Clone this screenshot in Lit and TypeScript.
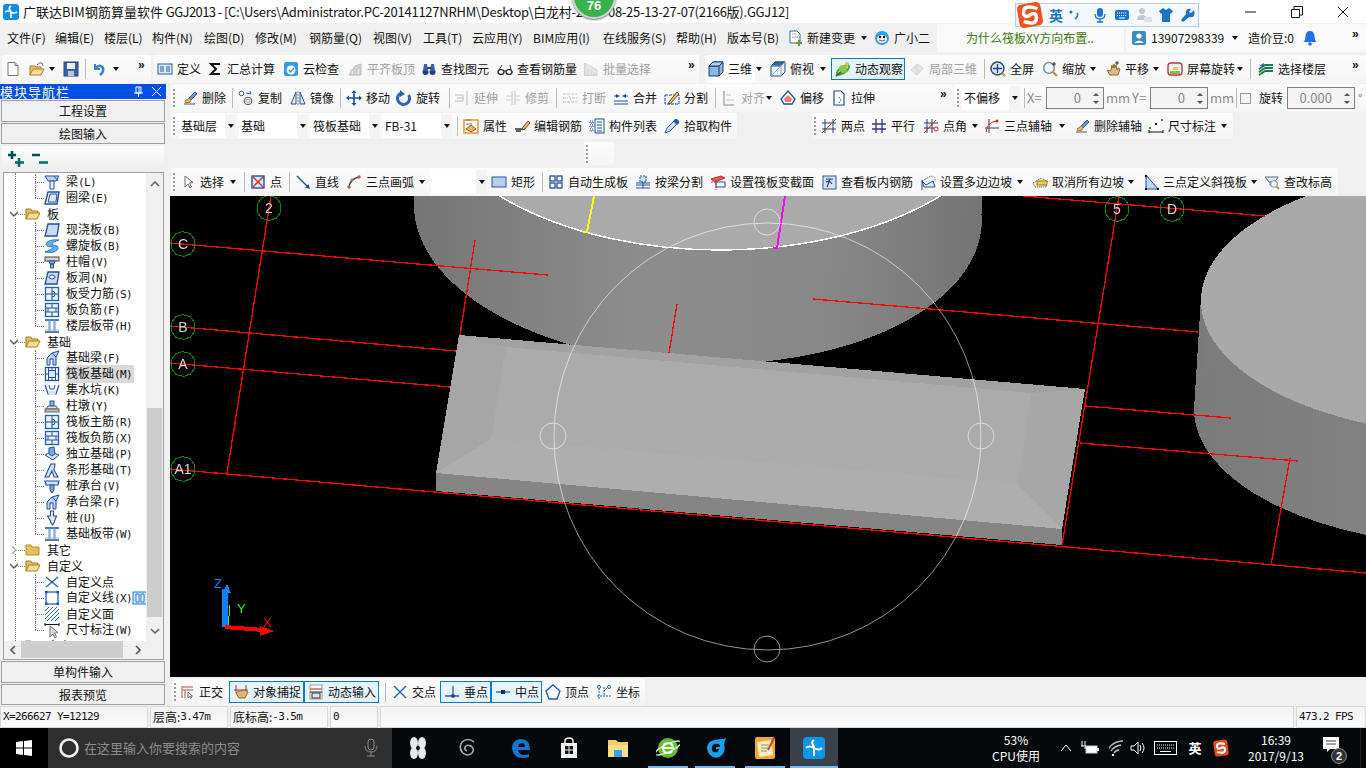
import { LitElement, html, css, svg } from "lit";
import { customElement } from "lit/decorators.js";

const I: Record<string, any> = {
  new: svg`<path d="M3 1.500h7l3 3v10H3z" fill="#fff" stroke="#777"/><path d="M10 1.500v3h3" fill="#ddd" stroke="#777"/>`,
  open: svg`<path d="M1 14V5h5l1 1h5v3" fill="#e9c469" stroke="#a87d22"/><path d="M1 14l3-6h11l-3 6z" fill="#f7dc93" stroke="#a87d22"/><path d="M8 4q2-3 5-2l1 3" stroke="#3a6fb5" fill="none"/>`,
  save: svg`<rect x="1" y="1" width="14" height="14" fill="#3d5fa8" stroke="#26427e"/><rect x="4" y="2" width="8" height="6" fill="#e6eef8"/><rect x="5" y="10" width="6" height="5" fill="#b9c4d6"/>`,
  undo: svg`<path d="M4 3v5h5" fill="none" stroke="#3a7fd5" stroke-width="2"/><path d="M4 8q5-6 8-1 1 4-3 7" fill="none" stroke="#3a7fd5" stroke-width="2.600"/>`,
  define: svg`<rect x="1" y="3" width="14" height="10" fill="#dce8f7" stroke="#2a5aa5"/><path d="M3 6h4M3 8h4M3 10h4M9 6h4M9 8h4M9 10h4" stroke="#2a5aa5"/>`,
  sigma: svg`<path d="M12 4V3H4l5 5-5 5h8v-1" fill="none" stroke="#111" stroke-width="2"/>`,
  cloud: svg`<rect x="1" y="1" width="14" height="14" rx="2" fill="#2f9be8"/><circle cx="8" cy="9" r="4.500" fill="#fff"/><path d="M5.500 9l2 2 3.500-4" fill="none" stroke="#2f9be8" stroke-width="1.500"/>`,
  align: svg`<path d="M2 14l6-9 6-2v11z" fill="#bbb" stroke="#999"/><path d="M4 14V9h3v5zM10 14V7h3v7z" fill="#ddd" stroke="#999"/>`,
  binoc: svg`<circle cx="4.500" cy="11" r="3" fill="#24408a"/><circle cx="11.500" cy="11" r="3" fill="#24408a"/><path d="M3 3h3l1 7H2zM10 3h3l1 7H9z" fill="#3c5fa8"/><rect x="6" y="6" width="4" height="2" fill="#24408a"/>`,
  glasses: svg`<ellipse cx="4" cy="11" rx="3" ry="2.400" fill="#fff" stroke="#333" stroke-width="1.400"/><ellipse cx="12" cy="11" rx="3" ry="2.400" fill="#fff" stroke="#333" stroke-width="1.400"/><path d="M7 10h2M2 9l3-5M14 9l-1-5" stroke="#333" fill="none"/>`,
  batch: svg`<path d="M2 2v12h12" fill="none" stroke="#bbb" stroke-width="2"/><path d="M2 2l12 7v5H2z" fill="#ddd" stroke="#bbb"/><path d="M5 7v7M8 9v5M11 11v3" stroke="#bbb"/>`,
  cube: svg`<path d="M1 5l4-4h10v10l-4 4H1z" fill="#8db7df" stroke="#123a6b"/><path d="M1 5h10v10M11 5l4-4" fill="none" stroke="#123a6b"/><path d="M1 5l4-4h10l-4 4z" fill="#b5d2ee" stroke="#123a6b"/>`,
  top: svg`<path d="M1 5l4-4h10v10l-4 4H1z" fill="#eaf1f9" stroke="#1d4a80"/><path d="M1 5l4-4h10l-4 4z" fill="#2f6aa8" stroke="#1d4a80"/><path d="M1 5h10v10M11 5l4-4M1 15l10-10" fill="none" stroke="#8aa9cc"/>`,
  orbit: svg`<ellipse cx="8" cy="9" rx="7" ry="3" fill="none" stroke="#4ba02c" stroke-width="2" transform="rotate(-35 8 9)"/><circle cx="8" cy="8" r="4" fill="#8dc63f"/><circle cx="12" cy="3" r="2" fill="#e8c12c"/><path d="M1 15l5-4" stroke="#2a6e2a" stroke-width="2"/>`,
  part: svg`<path d="M2 9l6-6 6 4-6 7z" fill="#ddd" stroke="#bbb"/><path d="M5 6l6 4M8 3v11" stroke="#bbb"/>`,
  full: svg`<circle cx="7.500" cy="7.500" r="6.500" fill="#dce8f7" stroke="#24408a" stroke-width="1.400"/><path d="M7.500 3v9M3 7.500h9" stroke="#24408a" stroke-width="1.300"/><path d="M12 12l3 3" stroke="#c8912e" stroke-width="2.400"/>`,
  zoom: svg`<circle cx="7" cy="7" r="5.400" fill="#f1f5fa" stroke="#7b8ea8" stroke-width="1.500"/><path d="M11 11l4 4" stroke="#c8912e" stroke-width="2.400"/><path d="M12 1v4M10 3h4" stroke="#333"/>`,
  pan: svg`<path d="M2 9l3 5h8l2-6-2-1-1 2-1-5-1 3-1-4-1 4-1-3-1 5-1 1z" fill="#d8bb80" stroke="#8a6d3a"/><path d="M12 0v4M10 2h4" stroke="#333"/>`,
  srot: svg`<rect x="1" y="2" width="14" height="12" rx="3" fill="#e9f3fa" stroke="#cc3333" stroke-width="1.400"/><path d="M3 10h10v3H3z" fill="#7fbf55"/><path d="M6 6h5v3H6z" fill="#efc94c"/>`,
  floors: svg`<path d="M1 8l6-4h8M1 11l6-4h8M1 14l6-4h8" fill="none" stroke="#1a7a50" stroke-width="1.800"/><path d="M1 5l5-3v3z" fill="#2a62b5"/>`,
  brush: svg`<path d="M2 14h11" stroke="#555"/><path d="M13 2L7 8l2 2 6-6z" fill="#6f93c4" stroke="#3a5a92"/><path d="M7 8l-4 3 1 2 4-1 1-2z" fill="#e8b870" stroke="#a37a3a"/>`,
  copy: svg`<circle cx="3.500" cy="3.500" r="2.300" fill="#fff" stroke="#555"/><circle cx="10" cy="11" r="3.800" fill="#fff" stroke="#555"/><circle cx="10" cy="11" r="2" fill="none" stroke="#999"/><path d="M8 3l5 1-1-3" fill="none" stroke="#1d5fb5"/>`,
  mirror: svg`<path d="M6 2v12H1zM10 2v12h5z" fill="#e4ecf7" stroke="#2a4f92"/><path d="M8 1v14" stroke="#888" stroke-dasharray="2 1"/>`,
  move: svg`<path d="M8 1v14M1 8h14" stroke="#1d4f9e" stroke-width="1.600"/><path d="M8 0l-2.500 3h5zM8 16l-2.500-3h5zM0 8l3-2.500v5zM16 8l-3-2.500v5z" fill="#1d4f9e"/>`,
  rot: svg`<path d="M12.500 5A6 6 0 1 1 5 3" fill="none" stroke="#2b62b8" stroke-width="3"/><path d="M4 0v7l5-3z" fill="#2b62b8"/>`,
  extend: svg`<path d="M1 5h8v6H1" fill="none" stroke="#999"/><path d="M3 8h7M13 1v14" stroke="#999"/>`,
  trim: svg`<path d="M7 1v14M10 1v14" stroke="#999"/><path d="M1 6h5M1 10h5M11 6h4M11 10h4" stroke="#aaa"/>`,
  brk: svg`<path d="M1 4h14M1 12h14M1 8h5M10 8h5" stroke="#999" stroke-dasharray="3 1"/><path d="M7 6l2 4" stroke="#999"/>`,
  merge: svg`<path d="M1 11h14M1 14h14" stroke="#1d4f9e"/><path d="M3 4l4 2-4 2zM13 4L9 6l4 2z" fill="#1d4f9e"/><path d="M1 6h3M12 6h3" stroke="#1d4f9e"/>`,
  split: svg`<rect x="1" y="5" width="14" height="9" fill="#f2f6fb" stroke="#1c39d8" stroke-dasharray="3 1"/><path d="M5 12l8-10 2 2-8 9-3 1z" fill="#e8c06c" stroke="#6b4a1d"/>`,
  dalign: svg`<path d="M3 1v14h10" fill="none" stroke="#999" stroke-width="2"/><path d="M5 4h5v2H5zM5 9h8v2H5z" fill="#ccc"/>`,
  offset: svg`<path d="M8 1l7 8-3 5H4l-3-5z" fill="#fff" stroke="#1f4e9e" stroke-width="1.300"/><path d="M8 5l4 4-1 3H5l-1-3z" fill="#ee7a6b"/>`,
  stretch: svg`<path d="M3 1h7l3 3v11H3z" fill="#fff" stroke="#1f4e9e" stroke-width="1.200"/><path d="M8 7l2 3-2 3" fill="none" stroke="#333" stroke-dasharray="1 1"/>`,
  props: svg`<rect x="1" y="2" width="14" height="13" fill="#fff" stroke="#e3933a" stroke-width="1.500"/><path d="M3 6h6M3 2h5" stroke="#777"/><path d="M3 11l5-4 5 4-5 3z" fill="#e8b45e" stroke="#8a6220"/>`,
  edit: svg`<path d="M1 11h10M2 13h5" stroke="#333" stroke-width="1.300"/><path d="M9 9l5-6 2 2-5 6-3 1z" fill="#e8c06c" stroke="#6b4a1d"/>`,
  list: svg`<path d="M1 3h3v2H1zM1 7h3v2H1zM1 11h3v2H1z" fill="#fff" stroke="#1f4e9e" stroke-dasharray="1 1"/><rect x="6" y="1" width="9" height="14" fill="#f3f7fc" stroke="#1f4e9e"/><path d="M8 4h5M8 7h5M8 10h5M8 13h5" stroke="#1f4e9e"/>`,
  pick: svg`<path d="M1 15l2-5 7-7 3 3-7 7z" fill="#cfe0f5" stroke="#2a5aa5"/><path d="M9 3l2-2h2l2 2v2l-2 2z" fill="#2a5aa5"/>`,
  twopt: svg`<path d="M4 1v14M12 1v14M1 5h14M1 11h14" stroke="#2e3a7a"/><path d="M1 15L15 1" stroke="#d81e1e"/><rect x="3" y="10" width="2" height="2" fill="#2e8a2e"/><rect x="11" y="4" width="2" height="2" fill="#2e8a2e"/>`,
  par: svg`<path d="M5 1v14M11 1v14M1 6h14M1 11h14" stroke="#2e3a7a" stroke-width="1.300"/>`,
  ptang: svg`<path d="M4 1v14M9 1v14M1 5h14M1 10h10" stroke="#2e3a7a"/><path d="M1 15L13 2" stroke="#d81e1e"/><circle cx="13" cy="11" r="2" fill="none" stroke="#d81e1e"/>`,
  arcax: svg`<path d="M5 1v14M1 10h14" stroke="#2e3a7a"/><path d="M2 14Q3 4 13 3" fill="none" stroke="#d81e1e"/><circle cx="13" cy="3" r="1.500" fill="#d81e1e"/>`,
  dim: svg`<path d="M1 12v3M15 12v3M1 14h14" stroke="#111"/><rect x="1" y="9" width="2" height="2" fill="#2ea82e"/><rect x="7" y="5" width="2" height="2" fill="#111"/><rect x="13" y="1" width="2" height="2" fill="#2ea82e"/>`,
  arrow: svg`<path d="M5 2v11l3-3 2 4 1.500-1-2-4 3.500-.5z" fill="#fff" stroke="#667"/>`,
  point: svg`<rect x="2" y="2" width="12" height="12" fill="#dce8f7" stroke="#1f3e8f" stroke-width="1.300"/><path d="M3 3l10 10M13 3L3 13" stroke="#c93030" stroke-width="1.300"/>`,
  line: svg`<path d="M2 2l11 11" stroke="#24528f" stroke-width="1.400"/><path d="M15 15l-5-1.500 3.500-3.500z" fill="#24528f"/>`,
  arc: svg`<path d="M3 13Q4 5 13 3" fill="none" stroke="#1f3e8f" stroke-width="1.600"/><circle cx="3" cy="13" r="1.800" fill="#d65a3a"/><circle cx="13" cy="3" r="1.800" fill="#d65a3a"/><circle cx="6" cy="6" r="1.400" fill="#d65a3a"/>`,
  rect: svg`<rect x="1" y="3" width="14" height="10" fill="#b8d0f0" stroke="#2452a5"/>`,
  auto: svg`<g fill="#fff" stroke="#1f4e9e" stroke-width="1.300"><rect x="2" y="2" width="5" height="5"/><rect x="9" y="2" width="5" height="5"/><rect x="2" y="9" width="5" height="5"/><rect x="9" y="9" width="5" height="5"/></g>`,
  bsplit: svg`<path d="M1 9h14M1 11h14M1 14h14" stroke="#1f4e9e"/><rect x="5" y="2" width="6" height="6" fill="#cfe0f5" stroke="#1f4e9e" stroke-dasharray="2 1"/><path d="M8 8v6" stroke="#1f4e9e"/>`,
  section: svg`<path d="M1 5l10-3 4 2-10 4z" fill="#e8554e" stroke="#b03030"/><rect x="6" y="8" width="9" height="5" fill="#fff" stroke="#1f4e9e"/><path d="M1 8h5v8" fill="none" stroke="#c03030" stroke-dasharray="2 1"/>`,
  view: svg`<rect x="2" y="2" width="13" height="13" fill="#d5e3f5" stroke="#2a5aa5"/><path d="M5 5h7M9 5l-3 8M5 8q4-2 6 2" fill="none" stroke="#1f3e8f" stroke-width="1.200"/>`,
  poly: svg`<path d="M2 7l9-5 4 2v3" fill="none" stroke="#1f4e9e" stroke-dasharray="1 1"/><path d="M2 7l4 4 7-4 2 6H4z" fill="#dfeaf7" stroke="#1f4e9e"/><path d="M2 6v10" stroke="#1f4e9e"/>`,
  cancel: svg`<path d="M1 9l8-5 6 3-1 6H3z" fill="#f6e9b0" stroke="#1f4e9e" stroke-dasharray="1 1"/><path d="M5 7h10v4H5z" fill="#eec95e" stroke="#997a1e"/>`,
  tri: svg`<path d="M3 1v14h12z" fill="#bcd8f5" stroke="#1f4e9e"/><circle cx="3" cy="2" r="1.200" fill="#111"/><circle cx="3" cy="15" r="1.200" fill="#111"/><circle cx="15" cy="15" r="1.200" fill="#111"/>`,
  elev: svg`<path d="M1 3h13l-3 5H5z" fill="#e8eef6" stroke="#5a6a80"/><path d="M6 8h4v3H6z" fill="#cbd4e0" stroke="#5a6a80"/><circle cx="10" cy="10" r="3.400" fill="#f1f5fa" stroke="#7b8ea8"/><path d="M12.500 12.500L15 15" stroke="#c8912e" stroke-width="2"/>`,
  newchg: svg`<path d="M3 1h7l3 3v9H3z" fill="#fff" stroke="#2a70b8"/><path d="M5 4h4M5 7h6" stroke="#9ab"/><path d="M9 12h2v-2h2v2h2v2h-2v2h-2v-2H9z" fill="#5aa02c"/>`,
  xiao: svg`<circle cx="8" cy="8" r="7" fill="#2d9ee8"/><ellipse cx="8" cy="9" rx="5" ry="4" fill="#e8f6fd"/><circle cx="6" cy="7" r="1.200" fill="#123"/><circle cx="10" cy="7" r="1.200" fill="#123"/><path d="M5 10q3 2 6 0" fill="none" stroke="#e25" />`,
  user: svg`<rect x="1" y="1" width="14" height="14" rx="2" fill="#3a8cc8"/><circle cx="8" cy="6" r="2.600" fill="#fff"/><path d="M3 13q5-5 10 0z" fill="#fff"/>`,
  bell: svg`<path d="M8 1q4 0 4.500 5 0 4 2 6H1.500q2-2 2-6Q4 1 8 1z" fill="#1a73e0"/><circle cx="8" cy="14" r="1.800" fill="#1a73e0"/>`,
  ortho: svg`<path d="M3 14V3h11M6 6v8M3 6h11" fill="none" stroke="#c98a8a" stroke-width="1.500"/><path d="M9 8v6l1.500-1.500 1 2 1-.5-1-2h2z" fill="#fff" stroke="#667"/>`,
  objsnap: svg`<path d="M3 1v8M13 1v8M1 6h14" stroke="#a33"/><path d="M3 9l3 5h6l3-6-3-2-6 1z" fill="#dcb772" stroke="#8a6d3a"/>`,
  dyn: svg`<rect x="2" y="1" width="12" height="14" fill="#fff" stroke="#999"/><path d="M2 5h12" stroke="#c66" stroke-width="1.500"/><path d="M2 8h12" stroke="#333"/><rect x="4" y="9" width="8" height="5" fill="#e4e4e4" stroke="#333"/>`,
  cross: svg`<path d="M2 2l12 12M14 2L2 14" stroke="#1f5fb5" stroke-width="1.400"/>`,
  perp: svg`<path d="M1 12h14M9 2v10" stroke="#1f5fb5" stroke-width="1.300"/><rect x="7.500" y="10.500" width="3" height="3" fill="#13306b"/>`,
  mid: svg`<path d="M1 8h14" stroke="#1f5fb5" stroke-width="1.300"/><rect x="6" y="6" width="4" height="4" fill="#13306b"/>`,
  vert: svg`<path d="M8 1l7 6-3 8H4L1 7z" fill="#fff" stroke="#1f5fb5" stroke-width="1.400"/>`,
  coord: svg`<path d="M3 1v14M1 12h14M8 3v9M13 2L8 7" stroke="#1f5fb5" stroke-dasharray="2 1"/><circle cx="3" cy="3" r="1.500" fill="#fff" stroke="#1f5fb5"/><circle cx="13" cy="3" r="1.500" fill="#fff" stroke="#1f5fb5"/>`,
  beam: svg`<path d="M1 2h14l-3 5H4z" fill="#bcd4f0" stroke="#1f4e9e"/><path d="M6 7h4v8H6z" fill="#e8f0fa" stroke="#1f4e9e"/><path d="M10 2l4 5" stroke="#1f4e9e"/>`,
  ring: svg`<path d="M4 2h11l-2 12H1z" fill="#fff" stroke="#1f4e9e" stroke-width="1.400"/><path d="M6 4h7l-1 8H4z" fill="#dbe7f7" stroke="#1f4e9e"/>`,
  cast: svg`<path d="M4 2h11l-2 12H1z" fill="#c6dcf5" stroke="#1f4e9e" stroke-width="1.300"/>`,
  spiral: svg`<path d="M15 2Q4 1 2 6q0 3 7 3 2 1-8 5 9 2 13-3 1-4-6-4 0-3 7-5z" fill="#67b0ec" stroke="#2a78c8"/>`,
  capi: svg`<rect x="1" y="3" width="14" height="4" fill="#d0d0d0" stroke="#444"/><path d="M5 7h6l-1 3H6zM6.500 10h3v4h-3z" fill="#8fb4e0" stroke="#1f4e9e"/>`,
  hole: svg`<path d="M4 2h11l-2 12H1z" fill="#c6dcf5" stroke="#1f4e9e" stroke-width="1.300"/><ellipse cx="8" cy="7" rx="3" ry="2" fill="#fff" stroke="#1f4e9e"/>`,
  force: svg`<rect x="1.500" y="1.500" width="13" height="13" fill="#eef4fb" stroke="#1f5fc5" stroke-width="1.300"/><path d="M8 2v12M2 8h12M8 5a3 3 0 1 1 0 6" fill="none" stroke="#1f4e9e"/>`,
  neg: svg`<rect x="1.500" y="1.500" width="13" height="13" fill="#eef4fb" stroke="#1f5fc5" stroke-width="1.300"/><path d="M8 2v4M8 10v4M2 6h12M2 10h12M4 6v4M12 6v4" stroke="#1f4e9e"/>`,
  band: svg`<path d="M1 2h14M1 14h14" stroke="#1f4e9e" stroke-width="1.400"/><path d="M5 2v12M11 2v12M6 2v12M10 2v12" stroke="#5f8fd0"/><path d="M1 12h14" stroke="#9fb8dc"/>`,
  fbeam: svg`<path d="M3 15V8l5-5 7-2-3 6v8h-3v-6H6v6z" fill="#b8d0ee" stroke="#1f4e9e"/><path d="M8 3l4 4" stroke="#1f4e9e"/>`,
  raft: svg`<rect x="1.500" y="1.500" width="13" height="13" fill="#fff" stroke="#1f4e9e" stroke-width="1.300"/><rect x="4.500" y="4.500" width="7" height="7" fill="#dbe7f7" stroke="#1f4e9e"/><path d="M8 2v2M8 12v2M2 8h2M12 8h2M4.500 2v2M11.500 2v2M4.500 12v2M11.500 12v2" stroke="#1f4e9e"/>`,
  pit: svg`<path d="M1 3l3 9h8l3-9" fill="none" stroke="#1f4e9e" stroke-width="1.200"/><path d="M5 3l1 4h4l1-4" fill="none" stroke="#1f4e9e"/><path d="M4 9h8l-1 4H5z" fill="#d8e4f4"/>`,
  pier: svg`<rect x="6" y="3" width="4" height="5" fill="#8fb4e0" stroke="#1f4e9e"/><path d="M4 8h8l2 3H2z" fill="#ddd" stroke="#555"/><rect x="1" y="11" width="14" height="3" fill="#bbb" stroke="#666"/>`,
  indep: svg`<path d="M1 9l6-3 8 3-6 5z" fill="#dbe7f7" stroke="#1f4e9e"/><path d="M5 8V2l5-1 1 7-3 2z" fill="#7ea6dd" stroke="#1f4e9e"/>`,
  strip: svg`<path d="M1 15l3-7 3-6h4l-1 6 4 7h-4l-2-6-3 6z" fill="#d2e1f4" stroke="#1f4e9e" stroke-width="1.100"/>`,
  cap: svg`<path d="M1 3h14l-1 4H2z" fill="#d2e1f4" stroke="#1f4e9e" stroke-width="1.200"/><path d="M6 7h4v5l-2 3-2-3z" fill="#7ea6dd" stroke="#1f4e9e"/>`,
  pile: svg`<path d="M6.500 1h3v5h3l-2 5 0 1-2 3-2-3v-1L3.500 6h3z" fill="#e2ecf8" stroke="#1f4e9e" stroke-width="1.100"/>`,
  xpt: svg`<path d="M2 3l12 10M14 3L2 13" stroke="#1f5fc5" stroke-width="1.200"/><circle cx="8" cy="8" r="1" fill="#1f3e8f"/>`,
  sq: svg`<rect x="2" y="2" width="12" height="12" fill="none" stroke="#1450c8" stroke-width="1.200"/><g fill="#1450c8"><rect x="1" y="1" width="2.500" height="2.500"/><rect x="12.500" y="1" width="2.500" height="2.500"/><rect x="1" y="12.500" width="2.500" height="2.500"/><rect x="12.500" y="12.500" width="2.500" height="2.500"/></g>`,
  hatch: svg`<path d="M1 5l4-4M1 9l8-8M1 13L13 1M3 15L15 3M7 15l8-8M11 15l4-4" stroke="#1f5fc5"/>`,
  tdim: svg`<path d="M1 1v3M15 1v3M1 2.500h14" stroke="#111"/><path d="M6 4v11l3-3 2 4 1.500-1-2-4 3.500-.5z" fill="#ddd" stroke="#777"/>`,
  folder: svg`<path d="M1 13V3h5l1 2h7v8z" fill="#e8bf58" stroke="#b58b2a"/>`,
  folderO: svg`<path d="M1 13V3h5l1 2h6v2" fill="#e0bb62" stroke="#a88023"/><path d="M1 13l3-6h11l-3 6z" fill="#f8de93" stroke="#a88023"/>`,
  mini: svg`<rect x="1" y="2" width="14" height="12" fill="#cfe6fb" stroke="#1a7de0"/><path d="M4 4h3v8H4zM9 4h3v8H9z" fill="#fff" stroke="#1a7de0"/>`,
};

interface E { k: string; x: number; ic?: string; t?: string; g?: boolean; w?: number; box?: boolean; col?: string; v?: string; wb?: boolean; fs?: number }
const it = (x: number, ic: string, t = "", o: Partial<E> = {}): E => ({ k: "i", x: x - 8, ic, t, ...o });
const bx = (x: number, w: number, ic: string, t: string): E => ({ k: "i", x, ic, t, box: true, w });
const dd = (x: number): E => ({ k: "d", x: x - 4 });
const sp = (x: number): E => ({ k: "s", x });
const hd = (x: number): E => ({ k: "h", x: x - 1 });
const tx = (x: number, t: string, o: Partial<E> = {}): E => ({ k: "t", x, t, ...o });
const more = (x: number): E => ({ k: "m", x: x - 5 });
const cb = (x: number, w: number, t: string): E => ({ k: "c", x, t, w });
const spin = (x: number, w: number, v: string): E => ({ k: "n", x, w, v });
const chk = (x: number): E => ({ k: "x", x });

type Group = [number, number, E[], string?];

function item(e: E, avail: number) {
  const ic = e.ic ? html`<svg class="ic" viewBox="0 0 16 16">${I[e.ic]}</svg>` : null;
  switch (e.k) {
    case "i": {
      const w = e.w ?? avail;
      const cls = `it ${e.g ? "gray" : ""} ${e.box ? "box" : ""} ${e.wb ? "wb" : ""}`;
      return html`<div class=${cls} style="width:${w}px;margin-right:${avail - w}px">${ic}${e.t ? html`<span class="lb">${e.t}</span>` : null}</div>`;
    }
    case "d": return html`<div class="it" style="width:${avail}px"><i class="caret"></i></div>`;
    case "s": return html`<div class="it" style="width:${avail}px"><i class="sep"></i></div>`;
    case "h": return html`<div class="it" style="width:${avail}px"><i class="handle"></i></div>`;
    case "t": return html`<div class="it" style="width:${avail}px;color:${e.col ?? "inherit"};font-size:${e.fs ?? 12}px">${e.t}</div>`;
    case "m": return html`<div class="it more" style="width:${avail}px">»</div>`;
    case "c": return html`<div class="combo" style="width:${e.w}px;margin-right:${avail - e.w!}px"><span class="ctext">${e.t}</span><span class="cdrop"><i class="caret"></i></span></div>`;
    case "n": return html`<div class="spin" style="width:${e.w}px;margin-right:${avail - e.w!}px"><span class="nv">${e.v}</span><span class="sb"><i class="up"></i><i class="down"></i></span></div>`;
    case "x": return html`<div class="it" style="width:${avail}px"><i class="check"></i></div>`;
  }
  return null;
}

function row(origin: number, groups: Group[], cls: string) {
  let prev = origin;
  return html`<div class="row ${cls}">
    ${groups.map(([g0, g1, es, gc]) => {
      const m = g0 - prev;
      prev = g1;
      return html`<div class="group ${gc ?? ""}" style="margin-left:${m}px;width:${g1 - g0}px;padding-left:${es[0].x - g0}px">
        ${es.map((e, i) => item(e, (i + 1 < es.length ? es[i + 1].x : g1) - e.x))}
      </div>`;
    })}
  </div>`;
}

const GM = { col: "#888", fs: 13 };
const MENU: Group[] = [
  [0, 937, [
    tx(7, "文件(F)"), tx(55, "编辑(E)"), tx(104, "楼层(L)"), tx(152, "构件(N)"), tx(204, "绘图(D)"), tx(255, "修改(M)"),
    tx(309, "钢筋量(Q)"), tx(373, "视图(V)"), tx(423, "工具(T)"), tx(472, "云应用(Y)"), tx(533, "BIM应用(I)"), tx(603, "在线服务(S)"),
    tx(676, "帮助(H)"), tx(727, "版本号(B)"), it(795, "newchg", "新建变更"), dd(865), it(882, "xiao", "广小二"),
  ], "plain"],
  [937, 1124, [tx(966, "为什么筏板XY方向布置..", { col: "#3c7a10" })], "soft"],
  [1126, 1366, [it(1139, "user", "13907298339"), dd(1236), tx(1248, "造价豆:0"), it(1310, "bell"), more(1357)], "soft"],
];
const TB1: Group[] = [
  [2, 151, [it(13, "new"), it(37, "open"), dd(53), it(71, "save"), sp(85), it(99, "undo"), dd(117), more(143)]],
  [153, 699, [
    it(165, "define", "定义"), it(215, "sigma", "汇总计算"), it(291, "cloud", "云检查"), it(355, "align", "平齐板顶", { g: true }),
    it(429, "binoc", "查找图元"), it(505, "glasses", "查看钢筋量"), it(591, "batch", "批量选择", { g: true }), more(693),
  ]],
  [705, 1366, [
    it(716, "cube", "三维", { w: 47, wb: true }), dd(760), it(778, "top", "俯视"), dd(824), bx(831, 74, "orbit", "动态观察"),
    it(917, "part", "局部三维", { g: true }), sp(984), it(998, "full", "全屏"), it(1050, "zoom", "缩放"), dd(1094),
    it(1113, "pan", "平移"), dd(1157), it(1175, "srot", "屏幕旋转"), dd(1241), sp(1250), it(1266, "floors", "选择楼层"), more(1357),
  ]],
];
const R2: Group[] = [
  [171, 953, [
    hd(174), it(190, "brush", "删除"), sp(232), it(246, "copy", "复制"), it(298, "mirror", "镜像"), sp(340), it(354, "move", "移动"),
    it(404, "rot", "旋转"), sp(449), it(462, "extend", "延伸", { g: true }), it(513, "trim", "修剪", { g: true }), sp(556),
    it(570, "brk", "打断", { g: true }), it(621, "merge", "合并"), it(672, "split", "分割"), sp(715),
    it(729, "dalign", "对齐", { g: true }), dd(770), it(788, "offset", "偏移"), it(839, "stretch", "拉伸"), more(945),
  ]],
  [954, 1366, [
    hd(958), cb(962, 58, "不偏移"), sp(1024), tx(1027, "X=", GM), spin(1046, 58, "0"), tx(1106, "mm", GM),
    tx(1132, "Y=", GM), spin(1150, 58, "0"), tx(1210, "mm", GM), sp(1236), chk(1240), tx(1259, "旋转"),
    spin(1287, 68, "0.000"), tx(1358, "°", { col: "#666" }),
  ]],
];
const R3: Group[] = [
  [171, 737, [
    hd(174), cb(179, 57, "基础层"), cb(239, 69, "基础"), cb(311, 69, "筏板基础"), cb(383, 69, "FB-31"), sp(457),
    it(471, "props", "属性"), it(522, "edit", "编辑钢筋"), it(597, "list", "构件列表"), it(672, "pick", "拾取构件"),
  ]],
  [812, 1233, [
    hd(815), it(829, "twopt", "两点"), it(879, "par", "平行"), it(931, "ptang", "点角"), dd(976), it(992, "arcax", "三点辅轴"), dd(1063),
    it(1082, "brush", "删除辅轴"), it(1156, "dim", "尺寸标注"), dd(1225),
  ]],
];
const R4: Group[] = [[584, 614, [hd(587)]]];
const R5: Group[] = [
  [171, 1338, [
    hd(174), it(188, "arrow", "选择"), dd(234), sp(244), it(258, "point", "点"), sp(289), it(303, "line", "直线"), it(354, "arc", "三点画弧"), dd(423),
    cb(431, 56, ""), it(499, "rect", "矩形"), sp(542), it(556, "auto", "自动生成板"), it(643, "bsplit", "按梁分割"), it(718, "section", "设置筏板变截面"),
    it(829, "view", "查看板内钢筋"), it(928, "poly", "设置多边边坡"), dd(1021), it(1040, "cancel", "取消所有边坡"), dd(1132), it(1151, "tri", "三点定义斜筏板"), dd(1255),
    it(1272, "elev", "查改标高"),
  ]],
];
const SNAP: Group[] = [
  [172, 645, [
    hd(175), it(187, "ortho", "正交"), bx(229, 75, "objsnap", "对象捕捉"), bx(304, 75, "dyn", "动态输入"), sp(385), it(400, "cross", "交点"),
    bx(440, 51, "perp", "垂点"), bx(491, 51, "mid", "中点"), it(553, "vert", "顶点"), it(604, "coord", "坐标"),
  ]],
];

const TREE: [number, string, string, string?, boolean?, boolean?][] = [
  [1, "beam", "梁", "(L)"], [1, "ring", "圈梁", "(E)", true], [0, "folderO", "板"],
  [1, "cast", "现浇板", "(B)"], [1, "spiral", "螺旋板", "(B)"], [1, "capi", "柱帽", "(V)"], [1, "hole", "板洞", "(N)"],
  [1, "force", "板受力筋", "(S)"], [1, "neg", "板负筋", "(F)"], [1, "band", "楼层板带", "(H)", true], [0, "folderO", "基础"],
  [1, "fbeam", "基础梁", "(F)"], [1, "raft", "筏板基础", "(M)", false, true], [1, "pit", "集水坑", "(K)"], [1, "pier", "柱墩", "(Y)"],
  [1, "force", "筏板主筋", "(R)"], [1, "neg", "筏板负筋", "(X)"], [1, "indep", "独立基础", "(P)"], [1, "strip", "条形基础", "(T)"],
  [1, "cap", "桩承台", "(V)"], [1, "fbeam", "承台梁", "(F)"], [1, "pile", "桩", "(U)"], [1, "band", "基础板带", "(W)", true],
  [0, "folder", "其它"], [0, "folderO", "自定义"], [1, "xpt", "自定义点"], [1, "sq", "自定义线", "(X)"], [1, "hatch", "自定义面"], [1, "tdim", "尺寸标注", "(W)", true],
  [0, "folder", "土方"],
];

const GRID: [number, number, string][] = [[269, 208, "2"], [183, 244, "C"], [183, 327, "B"], [183, 364, "A"], [183, 469, "A1"], [1117, 209, "5"], [1172, 209, "D"]];
const RED: [number, number, number, number][] = [
  [170, 243, 548, 275], [170, 326, 456, 351], [170, 363, 450, 387], [170, 469, 1366, 573], [1023, 196, 1265, 216], [813, 299, 1198, 332],
  [1085, 406, 1231, 418], [1080, 443, 1298, 461], [271, 196, 227, 473], [475, 240, 460, 335], [677, 304, 669, 353], [1119, 196, 1062, 545], [1290, 458, 1271, 565],
];
const poly = (x: number, y: number) =>
  Array.from({ length: 10 }, (_, i) => `${(x + 12.5 * Math.cos((i * Math.PI) / 5 + 0.3)).toFixed(1)},${(y + 12.5 * Math.sin((i * Math.PI) / 5 + 0.3)).toFixed(1)}`).join(" ");

function scene() {
  return html`<svg class="scene" viewBox="170 196 1196 481" width="1196" height="481">
    <defs>
      <linearGradient id="s1" x1="0" x2="1" y1="0" y2="0"><stop offset="0" stop-color="#757575"/><stop offset=".4" stop-color="#8d8d8d"/><stop offset=".75" stop-color="#878787"/><stop offset="1" stop-color="#747474"/></linearGradient>
      <linearGradient id="s2" x1="0" x2="1" y1="0" y2="0"><stop offset="0" stop-color="#7a7a7a"/><stop offset=".3" stop-color="#828282"/><stop offset="1" stop-color="#8e8e8e"/></linearGradient>
    </defs>
    <rect x="170" y="196" width="1196" height="481" fill="#000"/>
    <rect x="414" y="190" width="568" height="24" fill="url(#s1)"/>
    <ellipse cx="698" cy="213" rx="284" ry="151" fill="url(#s1)" transform="rotate(2 698 213)"/>
    <ellipse cx="720" cy="82" rx="300" ry="168" fill="#aaa" stroke="#fff" stroke-width="1.500"/>
    <path d="M1194 409L1201 297H1366V409z" fill="url(#s2)"/>
    <ellipse cx="1478" cy="409" rx="284" ry="137" fill="url(#s2)"/>
    <ellipse cx="1485" cy="301" rx="284" ry="135" fill="#a9a9a9"/>
    <path d="M436 473L1062 529V545L436 491z" fill="#858585"/>
    <path d="M459 335L1085 389L1062 529L436 473z" fill="#a8a8a8"/>
    <path d="M459 335L1085 389L1031 393L506 347z" fill="#a2a2a2"/>
    <path d="M506 347L1031 393L1018 484L491 439z" fill="#ababab"/>
    <path d="M491 439L1018 484L1062 529L436 473z" fill="#aeaeae"/>
    <path d="M459 335L506 347L491 439L436 473z" fill="#a6a6a6"/>
    <path d="M1031 393L1085 389L1062 529L1018 484z" fill="#a7a7a7"/>
    ${RED.map(([a, b, c, d]) => svg`<line x1=${a} y1=${b} x2=${c} y2=${d} stroke="#f00" stroke-width="1.300"/>`)}
    <path d="M594 196L587 232H583" fill="none" stroke="#ff0" stroke-width="2"/>
    <path d="M785 196L777 248H773" fill="none" stroke="#f0f" stroke-width="2"/>
    <g fill="none" stroke="#949494" class="sc">
      <circle cx="767.500" cy="436.500" r="213.500"/>
      <circle cx="767" cy="222" r="13"/><circle cx="553" cy="436" r="13"/><circle cx="981" cy="436" r="13"/><circle cx="767" cy="649" r="13"/>
    </g>
    ${GRID.map(([x, y, t]) => svg`
      <polygon points=${poly(x, y)} fill="none" stroke="#0b8a0b"/>
      <text x=${x} y=${y + 5} text-anchor="middle" class="gt">${t}</text>`)}
    <path d="M225 627l0-38" stroke="#0a82ff" stroke-width="6"/><path d="M227 584l-4 9h8z" fill="#0a82ff"/>
    <path d="M228 627l2-22" stroke="#3cf03c"/>
    <path d="M225 627l38 3" stroke="#f00" stroke-width="4"/><path d="M274 631l-14-5v10z" fill="#f00"/>
    <text x="214" y="588" class="ax" fill="#1a82ff">Z</text><text x="237" y="613" class="ax" fill="#3cf03c">Y</text><text x="263" y="627" class="ax" fill="#f00">X</text>
  </svg>`;
}

const TASKS: [number, any, boolean?, boolean?][] = [
  [418, svg`<g fill="#e8e8e8"><ellipse cx="8" cy="7" rx="4" ry="6"/><ellipse cx="16" cy="7" rx="4" ry="6"/><ellipse cx="8" cy="17" rx="4" ry="6"/><ellipse cx="16" cy="17" rx="4" ry="6"/></g><circle cx="12" cy="12" r="2" fill="#111"/>`],
  [467, svg`<path d="M19 6Q13 1 7 6q-4 6 1 11 5 4 9 0 3-4-1-7-4-2-6 1-1 3 2 4" fill="none" stroke="#aaa" stroke-width="1.600"/>`],
  [521, svg`<path d="M3 13Q3 3 12 3q9 0 9 11H9q1 5 6 5 3 0 5-1v3q-3 1-6 1-9 0-11-9zM9 11h7q0-4-3-4-3 0-4 4z" fill="#0f78d4"/>`],
  [569, svg`<path d="M4 7h16v15H4z" fill="#f2f2f2"/><path d="M8 8V5q0-3 4-3t4 3v3" fill="none" stroke="#f2f2f2" stroke-width="1.500"/><path d="M8 10h3.500v3.500H8zM12.500 10H16v3.500h-3.500zM8 14.500h3.500V18H8zM12.500 14.500H16V18h-3.500z" fill="#111"/>`],
  [618, svg`<path d="M2 4h8l2 2h10v15H2z" fill="#f4d064"/><path d="M2 9h20v12H2z" fill="#f9e08c"/><path d="M8 14h8v7H8z" fill="#38a3e0"/>`],
  [668, svg`<circle cx="12" cy="12" r="10" fill="#5fbf2f"/><ellipse cx="12" cy="12" rx="14" ry="4" fill="none" stroke="#cfeeb0" stroke-width="1.400" transform="rotate(-25 12 12)"/><path d="M7 12h10q0-5-5-5-5 0-5 5 0 5 5 5 3 0 4-2" fill="none" stroke="#fff" stroke-width="2"/>`, false, true],
  [715, svg`<path d="M20 3l3-1-2 6q2 7-2 11-4 4-9 2-6-3-6-10 1-6 8-7 4-1 8-1zM17 9q-3-2-6-1-3 2-2 6 1 3 5 2 2-1 2-3h-3v-2h6v7h-2" fill="#18a0f0"/>`, false, true],
  [765, svg`<rect x="2" y="1" width="20" height="22" rx="2" fill="#f3a72c"/><rect x="5" y="5" width="14" height="15" fill="#f8eec4" transform="rotate(-8 12 12)"/><path d="M8 9h8M8 12h8M8 15h6" stroke="#9a8a5a"/><path d="M21 2l-6 12" stroke="#d0452a" stroke-width="2"/>`, false, true],
  [814, svg`<rect x="1" y="1" width="22" height="22" rx="4" fill="#0b96ea"/><path d="M12 4q-3 2-1 5 1 1 1 3v8M4 12q3-3 8 0 5 3 8 0" fill="none" stroke="#fff" stroke-width="2"/>`, true, true],
];

@customElement("app-root")
export class AppRoot extends LitElement {
  static styles = css`
    :host { display:block; width:1366px; height:768px; overflow:hidden; position:relative; background:#f0f0f0; color:#111;
      font:12px/16px "Noto Sans CJK SC","Noto Sans",sans-serif; }
    * { box-sizing:border-box; }
    i { font-style:normal; display:block; }
    .title { height:23px; background:#fff; display:flex; align-items:center; padding-left:2px; font-size:13px; white-space:nowrap; }
    .logo { width:18px; height:18px; margin-right:3px; flex:none; }
    .ttext { flex:none; }
    .tver { letter-spacing:-.6px; }
    .tpath { letter-spacing:-.25px; }
    .winbtns { margin-left:auto; display:flex; flex:none; }
    .winbtn { width:46px; height:22px; display:flex; align-items:center; justify-content:center; }
    .badge { position:absolute; left:572px; top:-26px; width:44px; height:45px; border-radius:50%; background:#38b24a; box-shadow:0 1px 2px #777; border:2px solid #d2d6d2;
      color:#fff; font:bold 13px/12px "Liberation Sans",sans-serif; display:flex; align-items:flex-end; justify-content:center; padding-bottom:5px; }
    .ime { position:absolute; left:1015px; top:3px; width:184px; height:24px; display:flex; align-items:center; background:#f4f8fd; border:1px solid #b8cfe6; color:#1773cc; font-size:14px; font-weight:700; padding-left:33px; gap:6px; }
    .ime svg { width:16px; height:16px; flex:none; }
    .ime svg.slogo { position:absolute; left:-1px; top:-4px; width:30px; height:30px; }
    .ime svg.comma { width:12px; margin-right:5px; }
    .row { display:flex; flex:none; white-space:nowrap; }
    .group { display:flex; align-items:center; flex:none; background:linear-gradient(#fcfcfc,#f5f5f5); border-radius:2px; overflow:visible; }
    .group.plain { background:none; }
    .group.soft { background:#f9f9f9; }
    .menu { height:31px; padding:1px 0 2px; }
    .tb { height:30px; padding:1px 0 1px; }
    .r2 { height:29px; padding-bottom:1px; }
    .r3 { height:29px; padding-bottom:3px; }
    .r4 { height:26px; padding-bottom:3px; }
    .r5 { height:28px; }
    .snap { height:29px; padding:2px 0 1px; }
    .it { display:flex; align-items:center; flex:none; height:100%; }
    .ic { width:16px; height:16px; flex:none; }
    .lb { margin-left:4px; }
    .gray { color:#a0a0a0; }
    .gray .ic { filter:grayscale(1) opacity(.6); }
    .box { height:22px; background:#e5f3fb; border:1px solid #0a78d0; padding-left:3px; }
    .wb { background:#fff; }
    .caret { width:0; height:0; border:3px solid transparent; border-top:4px solid #111; border-bottom:0; }
    .sep { width:1px; height:20px; background:#b9b9b9; }
    .handle { width:2px; height:18px; background:repeating-linear-gradient(#999 0 2px,transparent 2px 4px); }
    .more { font:bold 12px/10px "Liberation Sans",sans-serif; align-items:flex-start; padding-top:5px; }
    .combo { display:flex; height:24px; flex:none; background:#fff; align-items:center; }
    .ctext { flex:1; padding-left:2px; font-size:12px; }
    .cdrop { width:11px; height:100%; background:#f3f3f3; display:flex; align-items:center; justify-content:center; }
    .spin { display:flex; height:22px; flex:none; border:1px solid #808080; background:#f4f4f4; color:#888; align-items:center; padding-right:1px; }
    .nv { flex:1; text-align:right; padding-right:8px; font-size:13px; }
    .sb { width:13px; display:flex; flex-direction:column; gap:5px; align-items:center; }
    .up { width:0; height:0; border:3px solid transparent; border-bottom:3px solid #555; border-top:0; }
    .down { width:0; height:0; border:3px solid transparent; border-top:3px solid #555; border-bottom:0; }
    .check { width:11px; height:11px; border:1px solid #999; background:#f4f4f4; }
    .main { display:flex; height:622px; }
    .left { width:170px; flex:none; display:flex; flex-direction:column; }
    .right { width:1196px; flex:none; display:flex; flex-direction:column; }
    .scene { display:block; flex:none; shape-rendering:crispEdges; isolation:isolate; }
    .sc { mix-blend-mode:screen; shape-rendering:auto; }
    .gt { font:14px "Liberation Sans",sans-serif; fill:#d6d6d6; }
    .ax { font:13px "Liberation Sans",sans-serif; }
    .lh { width:166px; height:15px; background:#0050e6; color:#fff; display:flex; align-items:center; font-size:13px; letter-spacing:1px; flex:none; }
    .lh svg { flex:none; width:11px; height:11px; }
    .lbtn { width:164px; margin-left:1px; height:22px; flex:none; border:1px solid #a0a0a0; background:#f0f0f0; display:flex; align-items:center; justify-content:center; font-size:12px; }
    .lhead { margin-top:1px; }
    .lbtn + .lbtn { margin-top:1px; height:21px; }
    .ltools { margin:2px 0 0 2px; width:162px; height:26px; flex:none; background:linear-gradient(#fff,#ececec); display:flex; align-items:center; padding-left:5px; gap:6px; }
    .treebox { margin-left:3px; width:161px; height:488px; flex:none; border:1px solid #a0a0a0; background:#f0f0f0; padding-bottom:2px; display:flex; flex-direction:column; }
    .treeup { flex:none; height:468px; display:flex; }
    .rows { position:relative; width:142px; flex:none; overflow:hidden; background:#fff; padding-top:1px; white-space:nowrap; }
    .vl { position:absolute; left:11px; top:0; bottom:0; border-left:1px dotted #777; }
    .tr { height:16px; display:flex; align-items:center; position:relative; }
    .tr.c { padding-left:40px; }
    .tr.f { padding-left:6px; }
    .tr.c::before { content:""; position:absolute; left:31px; top:0; bottom:0; border-left:1px dotted #777; }
    .tr.c.e::before { bottom:8px; }
    .tr.c::after { content:""; position:absolute; left:31px; top:8px; width:9px; border-top:1px dotted #777; }
    .tr.f::after { content:""; position:absolute; left:14px; top:8px; width:7px; border-top:1px dotted #777; }
    .tname { margin-left:6px; padding-right:2px; font-size:12px; }
    .sel { background:#d9d9d9; }
    .mono { font:11px/16px "DejaVu Sans Mono",monospace; letter-spacing:-.62px; }
    .chev { width:8px; height:8px; margin-right:7px; flex:none; background:#fff; position:relative; z-index:1; }
    .vs { width:17px; flex:none; display:flex; flex-direction:column; align-items:center; background:#f0f0f0; }
    .arr { flex:none; display:flex; align-items:center; justify-content:center; }
    .thumb { background:#cdcdcd; flex:none; }
    .hs { height:17px; flex:none; display:flex; background:#f0f0f0; }
    .statusbar { height:22px; display:flex; background:#f0f0f0; }
    .cell { flex:none; height:22px; border:1px solid #d9d9d9; background:linear-gradient(#f3f3f3,#fbfbfb); margin-right:2px; display:flex; align-items:center; padding-left:2px; font:11px/16px "DejaVu Sans Mono","Noto Sans CJK SC",monospace; letter-spacing:-.62px; white-space:nowrap; }
    .cell b { font:12px/16px "Noto Sans CJK SC",sans-serif; letter-spacing:0; }
    .taskbar { height:40px; background:#05090c; display:flex; position:relative; color:#fff; }
    .start { width:48px; background:#000; flex:none; display:flex; align-items:center; justify-content:center; }
    .search { width:344px; flex:none; background:#2f2f2f; color:#8c8c8c; display:flex; align-items:center; padding-left:9px; font-size:13px; position:relative; }
    .search svg { flex:none; }
    .task { width:48px; height:40px; flex:none; display:flex; align-items:center; justify-content:center; position:relative; }
    .task.act { background:#39414a; }
    .task.open::after { content:""; position:absolute; left:4px; right:4px; bottom:0; height:2px; background:#76b9ed; }
    .task.act::after { left:0; right:0; }
    .tray { flex:none; display:flex; flex-direction:column; align-items:center; justify-content:center; font-size:12px; line-height:16px; text-align:center; white-space:nowrap; }
    .ti { flex:none; align-self:center; display:block; }
    .notif { width:50px; border-right:1px solid #222; }
    .b2 { position:absolute; right:13px; top:20px; width:16px; height:16px; border-radius:50%; background:#333; border:1px solid #888; color:#fff; font:bold 11px/14px "Liberation Sans",sans-serif; text-align:center; }
  `;

  render() {
    let px = 392;
    const tasks = TASKS.map(([cx, g, act, open]) => {
      const m = cx - 24 - px;
      px = cx + 24;
      return html`<div class="task ${act ? "act" : ""} ${open ? "open" : ""}" style="margin-left:${m}px"><svg width="24" height="24" viewBox="0 0 24 24">${g}</svg></div>`;
    });
    return html`
      <div class="title">
        <svg class="logo" viewBox="0 0 18 18"><rect x="1" y="1" width="16" height="16" rx="3" fill="#0b8fe8"/><path d="M9 3q-3 2-1 4l1 2v6M3 9q3-2 6 0t6 0" fill="none" stroke="#fff" stroke-width="1.700"/></svg>
        <span class="ttext">广联达BIM钢筋算量软件 <span class="tver">GGJ2013 - </span><span class="tpath">[C:\\Users\\Administrator.PC-20141127NRHM\\Desktop\\白龙村-2017-08-25-13-27-07(2166版).GGJ12]</span></span>
        <div class="winbtns">
          <div class="winbtn"><svg width="12" height="12" viewBox="0 0 12 12"><path d="M0 6h11" stroke="#111"/></svg></div>
          <div class="winbtn"><svg width="12" height="12" viewBox="0 0 12 12"><path d="M.5 3.500h8v8h-8zM3 3V.500h8.500V9H9" fill="none" stroke="#111"/></svg></div>
          <div class="winbtn"><svg width="12" height="12" viewBox="0 0 12 12"><path d="M1 1l10 10M11 1L1 11" stroke="#111"/></svg></div>
        </div>
      </div>
      ${row(0, MENU, "menu")}
      ${row(0, TB1, "tb")}
      <div class="main">
        <div class="left">
          <div class="lh"><span style="flex:1">模块导航栏</span>
            <svg style="margin-right:7px" viewBox="0 0 11 11"><path d="M3 1h5v6H3zM1 7h9M5.500 7v4M6 1v6" fill="none" stroke="#fff"/></svg>
            <svg style="margin-right:4px" viewBox="0 0 11 11"><path d="M1 1l9 9M10 1l-9 9" stroke="#fff"/></svg>
          </div>
          <div class="lbtn lhead">工程设置</div>
          <div class="lbtn">绘图输入</div>
          <div class="ltools">
            <svg width="18" height="18" viewBox="0 0 18 18"><path d="M5 1v8M1 5h8" stroke="#004f4f" stroke-width="2.500"/><path d="M12 8v9M8 12.500h9" stroke="#006a6a" stroke-width="2.500"/></svg>
            <svg width="18" height="18" viewBox="0 0 18 18"><path d="M1 5h8" stroke="#004f4f" stroke-width="2.500"/><path d="M8 12.500h9" stroke="#006a6a" stroke-width="2.500"/></svg>
          </div>
          <div class="treebox">
            <div class="treeup">
              <div class="rows">
                <div class="vl"></div>
                ${TREE.map(([d, ic, name, mono, end, sel]) => d
                  ? html`<div class="tr c ${end ? "e" : ""}"><svg class="ic" viewBox="0 0 16 16">${I[ic]}</svg><span class="tname ${sel ? "sel" : ""}">${name}${mono ? html`<span class="mono">${mono}</span>` : null}</span>${name === "自定义线" ? html`<svg class="ic" style="margin-left:-2px" viewBox="0 0 16 16">${I.mini}</svg>` : null}</div>`
                  : html`<div class="tr f"><svg class="chev" viewBox="0 0 8 8"><path d=${ic === "folder" ? "M2 0l4 4-4 4" : "M0 2l4 4 4-4"} fill="none" stroke=${ic === "folder" ? "#aaa" : "#555"} stroke-width="1.500"/></svg><svg class="ic" viewBox="0 0 16 16">${I[ic]}</svg><span class="tname">${name}</span></div>`)}
              </div>
              <div class="vs">
                <div class="arr" style="height:21px"><svg width="10" height="6" viewBox="0 0 10 6"><path d="M1 5l4-4 4 4" fill="none" stroke="#666" stroke-width="1.600"/></svg></div>
                <div style="height:214px;flex:none"></div>
                <div class="thumb" style="width:15px;height:209px"></div>
                <div style="flex:1"></div>
                <div class="arr" style="height:21px"><svg width="10" height="6" viewBox="0 0 10 6"><path d="M1 1l4 4 4-4" fill="none" stroke="#666" stroke-width="1.600"/></svg></div>
              </div>
            </div>
            <div class="hs">
              <div class="arr" style="width:17px"><svg width="6" height="10" viewBox="0 0 6 10"><path d="M5 1L1 5l4 4" fill="none" stroke="#555" stroke-width="1.600"/></svg></div>
              <div class="thumb" style="width:102px;margin:0"></div>
              <div style="width:6px"></div>
              <div class="arr" style="width:17px"><svg width="6" height="10" viewBox="0 0 6 10"><path d="M1 1l4 4-4 4" fill="none" stroke="#555" stroke-width="1.600"/></svg></div>
            </div>
          </div>
          <div class="lbtn" style="margin-top:1px">单构件输入</div>
          <div class="lbtn">报表预览</div>
        </div>
        <div class="right">
          ${row(170, R2, "r2")}
          ${row(170, R3, "r3")}
          ${row(170, R4, "r4")}
          ${row(170, R5, "r5")}
          ${scene()}
          ${row(170, SNAP, "snap")}
        </div>
      </div>
      <div class="statusbar">
        <div class="cell" style="width:148px">X=266627 Y=12129</div>
        <div class="cell" style="width:78px"><b>层高:</b>3.47m</div>
        <div class="cell" style="width:98px"><b>底标高:</b>-3.5m</div>
        <div class="cell" style="width:48px">0</div>
        <div class="cell" style="width:914px"></div>
        <div class="cell" style="width:70px;margin:0">473.2 FPS</div>
      </div>
      <div class="taskbar">
        <div class="start"><svg width="18" height="18" viewBox="0 0 18 18"><path d="M1 3l7-1v6.500H1zM9 2l8-1v7.500H9zM1 9.500h7V16l-7-1zM9 9.500h8V17l-8-1z" fill="#fff"/></svg></div>
        <div class="search">
          <svg width="24" height="24" viewBox="0 0 24 24" style="margin-right:3px"><circle cx="12" cy="12" r="8.500" fill="none" stroke="#f2f2f2" stroke-width="2.600"/></svg>
          <span>在这里输入你要搜索的内容</span>
          <svg width="16" height="20" viewBox="0 0 16 20" style="position:absolute;left:315px;top:10px"><rect x="5" y="1" width="6" height="11" rx="3" fill="none" stroke="#8c8c8c"/><path d="M2 8q0 6 6 6t6-6M8 14v4M4 18h8" fill="none" stroke="#8c8c8c"/></svg>
        </div>
        ${tasks}
        <div class="tray" style="margin-left:146px;width:64px">53%<br />CPU使用</div>
        <svg class="ti" style="margin-left:12px" width="12" height="8" viewBox="0 0 12 8"><path d="M1 7l5-6 5 6" fill="none" stroke="#fff"/></svg>
        <svg class="ti" style="margin-left:9px" width="18" height="14" viewBox="0 0 18 14"><path d="M1 0v5M4 0v5M0 5h5v2H3" fill="none" stroke="#fff"/><rect x="5" y="5" width="11" height="7" fill="#fff" stroke="#ccc"/><rect x="16" y="7" width="2" height="3" fill="#fff"/></svg>
        <svg class="ti" style="margin-left:9px" width="16" height="16" viewBox="0 0 16 16"><path d="M1 8q5-7 14-7M3 11q3-5 10-6M6 13q2-3 5-3" fill="none" stroke="#bbb" stroke-width="1.400"/><circle cx="5" cy="15" r="1.200" fill="#fff"/></svg>
        <svg class="ti" style="margin-left:6px" width="16" height="16" viewBox="0 0 16 16"><path d="M1 6h3l4-4v12l-4-4H1zM10 5q2 3 0 6M12 3q4 5 0 10" fill="none" stroke="#fff"/></svg>
        <svg class="ti" style="margin-left:8px" width="23" height="14" viewBox="0 0 23 14"><rect x=".5" y=".5" width="22" height="13" fill="none" stroke="#fff"/><path d="M3 4h17M3 7h17" stroke="#fff" stroke-dasharray="1 1"/><path d="M6 10.500h11" stroke="#fff"/></svg>
        <div class="tray" style="margin-left:10px;width:16px;font-weight:700;font-size:13px">英</div>
        <svg class="ti" style="margin-left:9px" width="18" height="18" viewBox="0 0 18 18"><rect x="2" y="1" width="14" height="16" rx="3" fill="#e8481c" transform="rotate(-8 9 9)"/><path d="M13 5q-8-2-8 2t4 2 4 2-8 2" fill="none" stroke="#fff" stroke-width="2.200"/></svg>
        <div class="tray" style="margin-left:11px;width:70px">16:39<br />2017/9/13</div>
        <div class="task notif"><svg width="20" height="20" viewBox="0 0 20 20" style="margin-top:-6px;margin-left:-10px"><path d="M2 2h16v12H9l-3 3v-3H2z" fill="#fff"/><path d="M5 6h10M5 9h10" stroke="#444"/></svg><span class="b2">2</span></div>
      </div>
      <div class="badge">76</div>
      <div class="ime">
        <svg class="slogo" viewBox="0 0 28 28"><rect x="3" y="3" width="22" height="22" rx="4" fill="#f0521f" transform="rotate(-10 14 14)"/><path d="M21 8q-13-4-13 3t6 3 6 3-12 3" fill="none" stroke="#fff" stroke-width="3.200"/></svg>
        <span>英</span>
        <svg class="comma" viewBox="0 0 12 16"><circle cx="2" cy="5" r="1.500" fill="#1773cc"/><path d="M8 6q2 3-2 6" fill="none" stroke="#1773cc" stroke-width="1.600"/></svg>
        <svg viewBox="0 0 16 16"><rect x="5" y="1" width="6" height="9" rx="3" fill="#1773cc"/><path d="M3 7q0 5 5 5t5-5M8 12v3M5 15h6" fill="none" stroke="#1773cc" stroke-width="1.300"/></svg>
        <svg viewBox="0 0 16 16"><rect x="1" y="3" width="14" height="10" rx="2" fill="#1773cc"/><path d="M3 6h10M3 8.500h10" stroke="#fff" stroke-dasharray="1 1"/><path d="M5 11h6" stroke="#fff"/></svg>
        <svg viewBox="0 0 16 16"><circle cx="6" cy="4" r="3" fill="#c3c9d2"/><path d="M1 13q0-5 5-5t5 5z" fill="#c3c9d2"/><rect x="8" y="10" width="8" height="5" fill="#dde"/></svg>
        <svg viewBox="0 0 16 16"><path d="M5 1l3 2 3-2 4 3-2 3-1-1v9H4V6L3 7 1 4z" fill="#1773cc"/></svg>
        <svg viewBox="0 0 16 16"><path d="M14 3l-3 3-2-1 2-3q-4-1-5 2 0 2 0 3l-5 6 2 2 6-5q3 1 5-1 1-3 0-6z" fill="#1773cc"/></svg>
      </div>
    `;
  }
}
